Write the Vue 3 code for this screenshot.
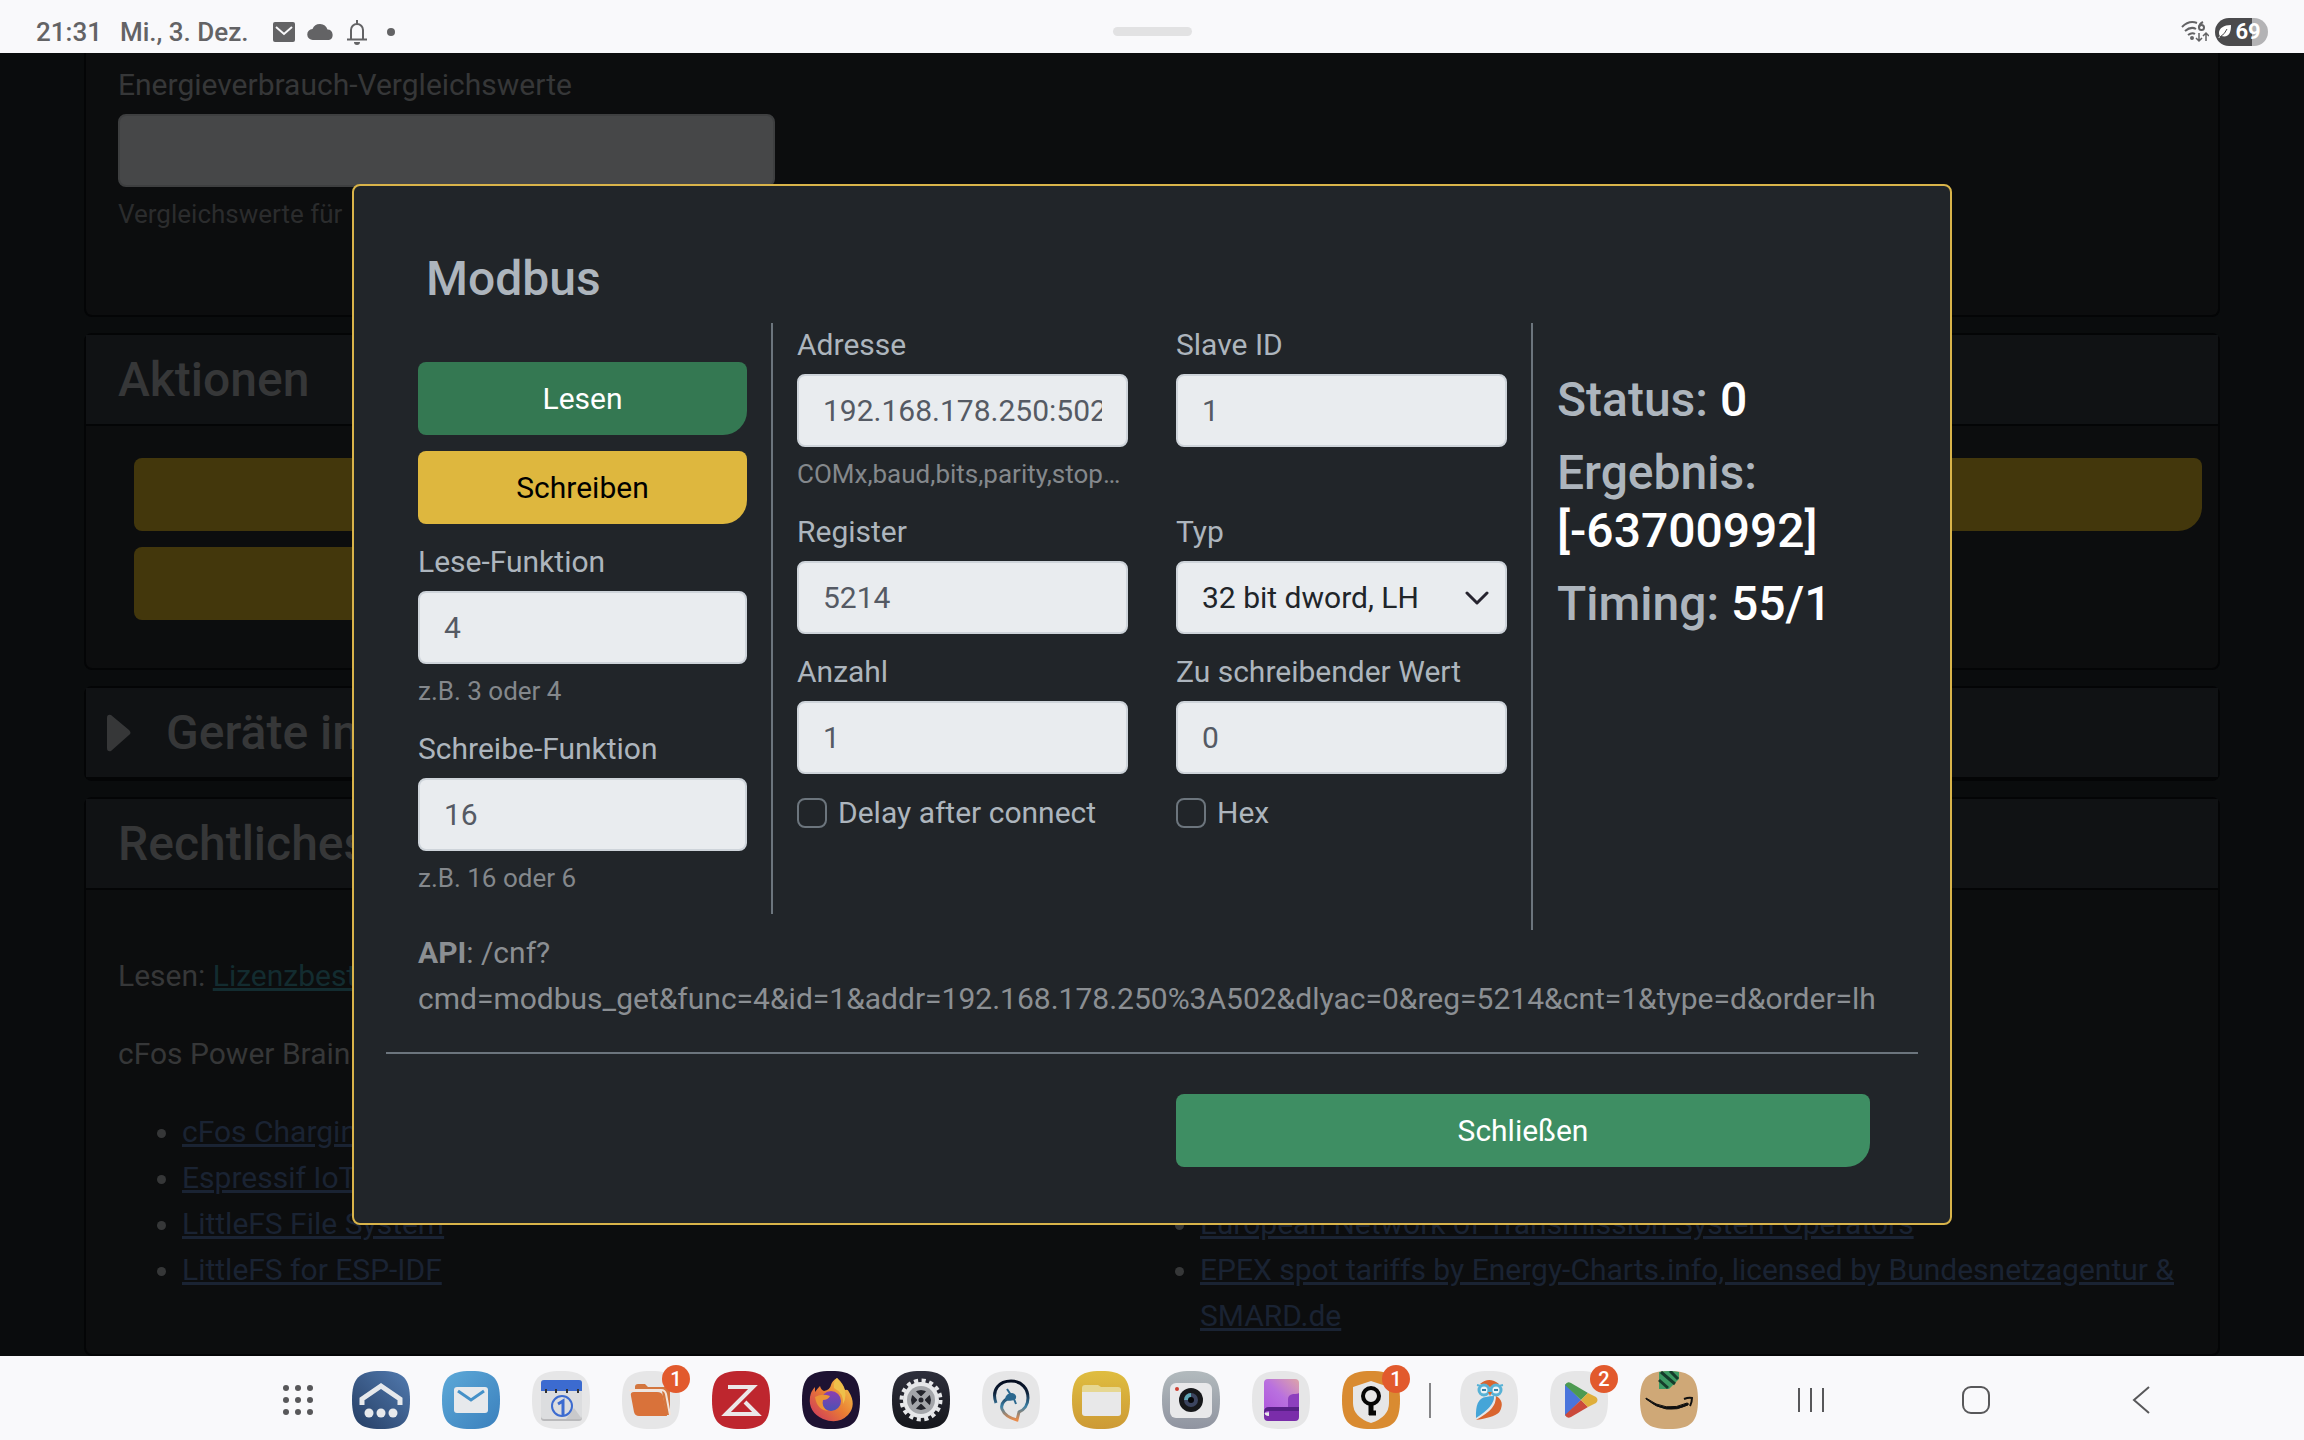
<script setup>
import { ref } from 'vue'

const address = ref('192.168.178.250:502')
const slaveId = ref('1')
const register = ref('5214')
const type = ref('dlh')
const count = ref('1')
const value = ref('0')
const readFn = ref('4')
const writeFn = ref('16')
const delay = ref(false)
const hex = ref(false)
const comparison = ref('')
</script>

<template>
  <div class="shell">
    <header class="status">
      <div class="status-left">
        <span>21:31</span>
        <span class="date">Mi., 3. Dez.</span>
        <svg width="22" height="20" viewBox="0 0 22 20"><rect width="22" height="20" rx="2" fill="#636365" /><path d="M3 5l8 7 8-7" fill="none" stroke="#f9f9fb" stroke-width="2" /></svg>
        <svg class="cloud" width="28" height="18" viewBox="0 0 28 18"><path d="M6 17a5.500 5.500 0 0 1-.5-11A8 8 0 0 1 20.500 6.500 5.400 5.400 0 0 1 22 17z" fill="#636365" /></svg>
        <svg class="bell" width="20" height="26" viewBox="0 0 20 26"><path d="M4 20v-9a6 6 0 0 1 12 0v9M0 20.500h20M10 1v4" fill="none" stroke="#636365" stroke-width="2" /><path d="M7 23h6a3 3 0 0 1-6 0z" fill="#636365" /></svg>
        <i class="dot"></i>
      </div>
      <i class="handle"></i>
      <div class="status-right">
        <svg width="28" height="24" viewBox="0 0 28 24" fill="none" stroke="#636365" stroke-width="2">
          <path d="M1 7Q8 0 16 3M4 11q6-5 11-2M7 15q4-3 7-1" />
          <circle cx="11" cy="18" r="1" />
          <path d="M22 2q-4 2-4 6" /><circle cx="20.500" cy="7.500" r="2.500" />
          <path d="M18 13v8M15 18l3 3 3-3M25 21v-8M22 16l3-3 3 3" stroke-width="1.500" />
        </svg>
        <div class="battery">
          <svg width="14" height="14" viewBox="0 0 14 14"><path d="M13 0C6 0 1 3 1 8q0 2 1 3L0 13q2 0 3-2c8 2 10-3 10-11z" fill="#fff" /><path d="M2 12Q7 9 9 4" stroke="#4b4b4d" stroke-width="1" fill="none" /></svg>
          <span>69</span>
        </div>
      </div>
    </header>

    <main class="main">
      <div class="page">
        <section class="card card-first">
          <label class="label" for="cmp">Energieverbrauch-Vergleichswerte</label>
          <input id="cmp" v-model="comparison" class="input input-dim" type="text" />
          <p class="hint">Vergleichswerte für</p>
        </section>
        <section class="card">
          <h2 class="card-head">Aktionen</h2>
          <div class="actions">
            <button class="btn btn-dim" aria-label="Aktion 1"></button>
            <button class="btn btn-dim btn-half" aria-label="Aktion 2"></button>
          </div>
        </section>
        <section class="card">
          <h2 class="card-head card-fold">
            <svg width="24" height="38" viewBox="0 0 24 38"><path d="M0 4Q0 0 4 1L22 16q3 3 0 5L4 37Q0 38 0 34z" fill="#363738" /></svg>
            Geräte im
          </h2>
        </section>
        <section class="card card-last">
          <h2 class="card-head">Rechtliches</h2>
          <div class="legal">
            <p>Lesen: <a class="license" href="#">Lizenzbestimmungen</a></p>
            <p>cFos Power Brain</p>
            <div class="lists">
              <ul>
                <li><a href="#">cFos Charging</a></li>
                <li><a href="#">Espressif IoT</a></li>
                <li><a href="#">LittleFS File System</a></li>
                <li><a href="#">LittleFS for ESP-IDF</a></li>
              </ul>
              <ul class="list-right">
                <li><a href="#">European Network of Transmission System Operators</a></li>
                <li><a href="#">EPEX spot tariffs by Energy-Charts.info, licensed by Bundesnetzagentur &amp; SMARD.de</a></li>
              </ul>
            </div>
          </div>
        </section>
      </div>

      <div class="overlay">
        <div class="modal" role="dialog" aria-labelledby="title">
          <h1 id="title" class="title">Modbus</h1>
          <div class="cols">
            <div class="col col-left">
              <button class="btn btn-read">Lesen</button>
              <button class="btn btn-write">Schreiben</button>
              <div class="group">
                <label class="label" for="readfn">Lese-Funktion</label>
                <input id="readfn" v-model="readFn" class="input" type="text" />
                <p class="hint">z.B. 3 oder 4</p>
              </div>
              <div class="group">
                <label class="label" for="writefn">Schreibe-Funktion</label>
                <input id="writefn" v-model="writeFn" class="input" type="text" />
                <p class="hint">z.B. 16 oder 6</p>
              </div>
            </div>
            <div class="col col-mid">
              <div class="group">
                <label class="label" for="addr">Adresse</label>
                <input id="addr" v-model="address" class="input" type="text" />
                <p class="hint">COMx,baud,bits,parity,stop…</p>
              </div>
              <div class="group">
                <label class="label" for="slave">Slave ID</label>
                <input id="slave" v-model="slaveId" class="input" type="text" />
              </div>
              <div class="group">
                <label class="label" for="reg">Register</label>
                <input id="reg" v-model="register" class="input" type="text" />
              </div>
              <div class="group">
                <label class="label" for="type">Typ</label>
                <div class="select-wrap">
                  <select id="type" v-model="type" class="input select">
                    <option value="dlh">32 bit dword, LH</option>
                  </select>
                  <svg class="chevron" width="24" height="16" viewBox="0 0 24 16"><path d="M2 3l10 10L22 3" fill="none" stroke="#26242f" stroke-width="3" stroke-linecap="round" stroke-linejoin="round" /></svg>
                </div>
              </div>
              <div class="group">
                <label class="label" for="cnt">Anzahl</label>
                <input id="cnt" v-model="count" class="input" type="text" />
              </div>
              <div class="group">
                <label class="label" for="val">Zu schreibender Wert</label>
                <input id="val" v-model="value" class="input" type="text" />
              </div>
              <label class="check"><input v-model="delay" type="checkbox" />Delay after connect</label>
              <label class="check"><input v-model="hex" type="checkbox" />Hex</label>
            </div>
            <div class="col col-right">
              <p>Status: <b>0</b></p>
              <p>Ergebnis: <b>[-63700992]</b></p>
              <p>Timing: <b>55/1</b></p>
            </div>
          </div>
          <p class="api"><b>API</b>: /cnf?<br />cmd=modbus_get&amp;func=4&amp;id=1&amp;addr=192.168.178.250%3A502&amp;dlyac=0&amp;reg=5214&amp;cnt=1&amp;type=d&amp;order=lh</p>
          <hr class="rule" />
          <div class="footer">
            <button class="btn btn-close">Schließen</button>
          </div>
        </div>
      </div>
    </main>

    <footer class="dock">
      <button class="launcher" aria-label="Apps">
        <svg width="30" height="30" viewBox="0 0 30 30" fill="#58585a">
          <circle v-for="n in 9" :key="n" :cx="3 + ((n - 1) % 3) * 12" :cy="3 + Math.floor((n - 1) / 3) * 12" r="3" />
        </svg>
      </button>
      <div class="apps">
        <button class="app" aria-label="Home">
          <svg viewBox="0 0 58 58"><defs><linearGradient id="gh" x1="1" y1="0" x2="0" y2="1"><stop stop-color="#527bb0" /><stop offset="1" stop-color="#253d63" /></linearGradient></defs><path d="M0 29C0 7 7 0 29 0s29 7 29 29-7 29-29 29S0 51 0 29z" fill="url(#gh)" /><path d="M10 34v-6l19-13 19 13v6" fill="none" stroke="#e7e9ec" stroke-width="5" /><g fill="#e7e9ec"><circle cx="17" cy="42" r="4.500" /><circle cx="29" cy="42" r="4.500" /><circle cx="41" cy="42" r="4.500" /></g></svg>
        </button>
        <button class="app" aria-label="Mail">
          <svg viewBox="0 0 58 58"><defs><linearGradient id="gm" x1="0" y1="0" x2="1" y2="1"><stop stop-color="#5da9d8" /><stop offset="1" stop-color="#3b80bd" /></linearGradient></defs><path d="M0 29C0 7 7 0 29 0s29 7 29 29-7 29-29 29S0 51 0 29z" fill="url(#gm)" /><rect x="12" y="16" width="34" height="26" rx="3" fill="#e7e9ec" /><path d="M16 20l13 9 13-9" fill="none" stroke="#4691c8" stroke-width="3" /></svg>
        </button>
        <button class="app" aria-label="Kalender">
          <svg viewBox="0 0 58 58"><path d="M0 29C0 7 7 0 29 0s29 7 29 29-7 29-29 29S0 51 0 29z" fill="#e6e6e7" /><rect x="9" y="9" width="41" height="41" rx="3" fill="#b9b9bb" /><rect x="9" y="9" width="41" height="39" rx="3" fill="#dcdddf" /><path d="M9 12q0-3 3-3h35q3 0 3 3v8H9z" fill="#3c6bd0" /><path d="M14 18v4M24 18v4M35 18v4M46 18v4" stroke="#333" stroke-width="2" /><path d="M34 48l8-11 8 11z" fill="#c9c9cb" /><circle cx="30" cy="35" r="10" fill="none" stroke="#3c6bd0" stroke-width="2" /><path d="M26 33l5-3v14" fill="none" stroke="#3c6bd0" stroke-width="3" /></svg>
        </button>
        <button class="app" aria-label="Dateien">
          <svg viewBox="0 0 58 58"><path d="M0 29C0 7 7 0 29 0s29 7 29 29-7 29-29 29S0 51 0 29z" fill="#e6e6e7" /><path d="M13 18v-2q0-3 3-3h7l3 3h22v28h-4L40 20z" fill="#d3763f" /><path d="M8 20q0-1 2-1h29q4 0 5 4l4 21" fill="none" stroke="#f4e4da" stroke-width="2" /><path d="M9 25q-1-4 3-4h23q5 0 6 4l4 20H17q-4 0-5-4z" fill="#d9723a" /></svg>
          <span class="badge">1</span>
        </button>
        <button class="app" aria-label="Zotero">
          <svg viewBox="0 0 58 58"><path d="M0 29C0 7 7 0 29 0s29 7 29 29-7 29-29 29S0 51 0 29z" fill="#be262e" /><path d="M16 16h25L14 43h31L33 31" fill="none" stroke="#ece7e8" stroke-width="4" /></svg>
        </button>
        <button class="app" aria-label="Firefox">
          <svg viewBox="0 0 58 58"><defs><linearGradient id="gf" x1="1" y1="0" x2="0" y2="1"><stop stop-color="#f3d34f" /><stop offset=".5" stop-color="#ea7d33" /><stop offset="1" stop-color="#c92f63" /></linearGradient><linearGradient id="gg" x1="0" y1="0" x2="0" y2="1"><stop stop-color="#8d3fb0" /><stop offset="1" stop-color="#4b51b5" /></linearGradient></defs><path d="M0 29C0 7 7 0 29 0s29 7 29 29-7 29-29 29S0 51 0 29z" fill="#1e1232" /><path d="M35 7q6 5 8 12 3-1 4 2 8 13-1 23Q36 54 21 48 6 41 8 26q1-6 5-10v5q3-4 5-6 1 4 4 5 6-1 7-6 1-4 6-7z" fill="url(#gf)" /><circle cx="29" cy="30" r="10" fill="url(#gg)" /><path d="M13 26q7-4 15-1-2 4-7 4-2 7 5 11-11-1-13-14z" fill="#eb9437" /><path d="M32 17q10 5 9 16 5-9 0-18l-6-8q-4 4-3 10z" fill="#eec04a" /></svg>
        </button>
        <button class="app" aria-label="Einstellungen">
          <svg viewBox="0 0 58 58"><defs><linearGradient id="gs" x1="0" y1="0" x2="0" y2="1"><stop stop-color="#2e2f3b" /><stop offset="1" stop-color="#15161b" /></linearGradient></defs><path d="M0 29C0 7 7 0 29 0s29 7 29 29-7 29-29 29S0 51 0 29z" fill="url(#gs)" /><circle cx="29" cy="29" r="19.500" fill="none" stroke="#e6e7e9" stroke-width="4" stroke-dasharray="4.100 3.560" /><circle cx="29" cy="29" r="18" fill="#e6e7e9" /><circle cx="29" cy="29" r="14" fill="#a3a5a9" /><circle cx="29" cy="29" r="10" fill="#23242b" /><path d="M20 20l18 18M38 20L20 38" stroke="#a3a5a9" stroke-width="5" /><circle cx="29" cy="29" r="4" fill="#a3a5a9" /><circle cx="29" cy="29" r="2.500" fill="#23242b" /></svg>
        </button>
        <button class="app" aria-label="Assistent">
          <svg viewBox="0 0 58 58"><defs><linearGradient id="ga" x1="0" y1="0" x2="0" y2="1"><stop stop-color="#050d20" /><stop offset=".3" stop-color="#0e2038" /><stop offset=".65" stop-color="#3b80a6" /><stop offset="1" stop-color="#ea8b4a" /></linearGradient></defs><path d="M0 29C0 7 7 0 29 0s29 7 29 29-7 29-29 29S0 51 0 29z" fill="#e6e6e7" /><path d="M14 32C9 18 18 10 29 10c11 0 17 8 17 17 0 7-4 12-9 14l-2 8q-12-3-15-11c-2-7 4-10 9-12" fill="none" stroke="url(#ga)" stroke-width="3" /><path d="M24 28q1-5 6-5 4 1 3 4-3 3-9 1zM25 18l4 6M32 28l2 5" fill="#2b688f" stroke="#2b688f" stroke-width="2" /></svg>
        </button>
        <button class="app" aria-label="Ordner">
          <svg viewBox="0 0 58 58"><defs><linearGradient id="go" x1="0" y1="0" x2="0" y2="1"><stop stop-color="#dfbd40" /><stop offset="1" stop-color="#cd9a35" /></linearGradient></defs><path d="M0 29C0 7 7 0 29 0s29 7 29 29-7 29-29 29S0 51 0 29z" fill="url(#go)" /><path d="M10 24v-7q0-3 3-3h13l3 2h17q3 0 3 3v5z" fill="#e6d792" /><path d="M10 21h39v21q0 3-3 3H13q-3 0-3-3z" fill="#e8e8e9" /></svg>
        </button>
        <button class="app" aria-label="Kamera">
          <svg viewBox="0 0 58 58"><defs><linearGradient id="gk" x1="0" y1="0" x2="0" y2="1"><stop stop-color="#b2babd" /><stop offset="1" stop-color="#9094a0" /></linearGradient></defs><path d="M0 29C0 7 7 0 29 0s29 7 29 29-7 29-29 29S0 51 0 29z" fill="url(#gk)" /><rect x="8" y="12" width="42" height="35" rx="6" fill="#e8e8ea" /><circle cx="29" cy="29" r="12" fill="#17181b" /><circle cx="29" cy="29" r="7" fill="#3c4560" /><path d="M29 22a7 7 0 0 0-7 7h4l3-3z" fill="#5fa6b4" /><circle cx="29" cy="29" r="3" fill="#060608" /><circle cx="15" cy="18" r="2" fill="#ce3f32" /></svg>
        </button>
        <button class="app" aria-label="Notizen">
          <svg viewBox="0 0 58 58"><defs><linearGradient id="gn" x1="0" y1="1" x2="1" y2="0"><stop stop-color="#ae55dc" /><stop offset=".5" stop-color="#b970df" /><stop offset="1" stop-color="#dda4a8" /></linearGradient></defs><path d="M0 29C0 7 7 0 29 0s29 7 29 29-7 29-29 29S0 51 0 29z" fill="#e6e6e7" /><path d="M12 42V12q0-4 4-4h27q4 0 4 4v25z" fill="url(#gn)" /><path d="M47 22v20H36V28q0-4 5-5 5 0 6-1z" fill="#8d3fbe" /><path d="M12 40q0 5 5 5V36h30v10q0 4-4 4H16q-4 0-4-4z" fill="#7a2daa" /><path d="M12 41q0-5 5-5h30v4H17q-5 0-5 4z" fill="#571f86" /></svg>
        </button>
        <button class="app" aria-label="Passwörter">
          <svg viewBox="0 0 58 58"><path d="M0 29C0 7 7 0 29 0s29 7 29 29-7 29-29 29S0 51 0 29z" fill="#d98b31" /><path d="M29 10l18 6v16q0 14-18 20-18-6-18-20V16z" fill="#e6e6e7" /><circle cx="29" cy="25" r="8" fill="none" stroke="#060606" stroke-width="4" /><path d="M29 33v11M27 42h7" stroke="#060606" stroke-width="5" /></svg>
          <span class="badge">1</span>
        </button>
        <i class="divider"></i>
        <button class="app" aria-label="Eule">
          <svg viewBox="0 0 58 58"><path d="M0 29C0 7 7 0 29 0s29 7 29 29-7 29-29 29S0 51 0 29z" fill="#e6e6e7" /><path d="M20 13q9-8 19 0l-9 3zM36 25q9 5 4 15-3 6-24 9 12-7 16-12 4-5 4-12z" fill="#d9652f" /><path d="M16 47q-1-20 10-21 4-1 8-1 1 10-18 22z" fill="#45a5d8" /><g fill="#eaf2f5" stroke="#58b2d6" stroke-width="3"><circle cx="24" cy="19" r="5" /><circle cx="36" cy="19" r="5" /></g><path d="M17 14l4 1M43 14l-4 1" stroke="#58b2d6" stroke-width="2" /><path d="M22 19h4M34 19h4" stroke="#317fa5" stroke-width="2" /><path d="M28 21h4l-2 4z" fill="#d9652f" /></svg>
        </button>
        <button class="app" aria-label="Play Store">
          <svg viewBox="0 0 58 58"><path d="M0 29C0 7 7 0 29 0s29 7 29 29-7 29-29 29S0 51 0 29z" fill="#e6e6e7" /><path d="M15 13v32l16-16z" fill="#4a75dc" /><path d="M15 14q2-4 6-2l17 10-7 7z" fill="#4d9a51" /><path d="M15 44q2 4 6 2l17-10-7-7z" fill="#cb4a3b" /><path d="M38 22l8 4q3 3 0 6l-8 4-7-7z" fill="#dfae3b" /></svg>
          <span class="badge">2</span>
        </button>
        <button class="app" aria-label="Amazon">
          <svg viewBox="0 0 58 58"><path d="M0 29C0 7 7 0 29 0s29 7 29 29-7 29-29 29S0 51 0 29z" fill="#cfa877" /><path d="M19 1q10-2 20 0v7L29 18H19z" fill="#3d9a63" /><path d="M19 9l9 8M21 1l14 12M30 0l8 8" stroke="#153c2b" stroke-width="3" /><path d="M6 27q20 15 41 5 2 0 1 2-22 11-42-6z" fill="#101010" stroke="#101010" stroke-linejoin="round" /><path d="M44 28q5-2 8-1 0 4-2 8" fill="none" stroke="#101010" stroke-width="2" /></svg>
        </button>
      </div>
      <nav class="nav">
        <button aria-label="Letzte Apps"><svg width="30" height="30" viewBox="0 0 30 30"><path d="M3 3v24M15 3v24M27 3v24" stroke="#58585a" stroke-width="2" /></svg></button>
        <button aria-label="Startbildschirm"><svg width="30" height="30" viewBox="0 0 30 30"><rect x="2" y="2" width="26" height="26" rx="8" fill="none" stroke="#58585a" stroke-width="2" /></svg></button>
        <button aria-label="Zurück"><svg width="30" height="30" viewBox="0 0 30 30"><path d="M23 2L8 15l15 13" fill="none" stroke="#58585a" stroke-width="2" /></svg></button>
      </nav>
    </footer>
  </div>
</template>

<style>
body {
  background: #0a0c0d;
}
</style>

<style scoped>
.shell,
.shell * {
  box-sizing: border-box;
}
.shell {
  display: flex;
  flex-direction: column;
  height: 100vh;
  font: 400 30px/46px Roboto, "Noto Sans", sans-serif;
  color: #adb5bd;
}
p,
h1,
h2,
ul {
  margin: 0;
}
button,
input,
select {
  font: inherit;
}
button {
  border: 0;
  padding: 0;
  background: none;
}
svg {
  display: block;
  flex: none;
}

/* status bar */
.status {
  flex: none;
  display: grid;
  grid-template-columns: 1fr auto 1fr;
  align-items: center;
  height: 53px;
  padding: 10px 36px 0;
  background: #f9f9fb;
  color: #636365;
  font-size: 26px;
  line-height: 32px;
  font-weight: 500;
}
.status-left,
.status-right {
  display: flex;
  align-items: center;
}
.date {
  margin: 0 24px 0 18px;
}
.cloud {
  margin: 0 12px;
}
.dot {
  width: 8px;
  height: 8px;
  margin-left: 20px;
  border-radius: 50%;
  background: #636365;
}
.handle {
  width: 79px;
  height: 9px;
  border-radius: 5px;
  background: #e2e2e3;
}
.status-right {
  justify-content: flex-end;
  gap: 6px;
}
.battery {
  display: flex;
  align-items: center;
  justify-content: center;
  gap: 3px;
  width: 53px;
  height: 28px;
  padding-right: 4px;
  border-radius: 14px;
  background: linear-gradient(90deg, #4b4b4d 69%, #b3b3b5 69%);
  color: #fff;
  font-size: 22px;
  line-height: 28px;
  font-weight: 700;
}

/* dimmed page */
.main {
  position: relative;
  flex: 1;
  min-height: 0;
  overflow: hidden;
}
.page {
  display: flex;
  flex-direction: column;
  gap: 16px;
  height: 100%;
  padding: 0 84px;
  background: #0a0c0d;
  color: #363738;
}
.card {
  flex: none;
  border: 2px solid #040506;
  border-radius: 8px;
  background: #0c0d0e;
}
.card-first {
  height: 264px;
  padding: 10px 32px 0;
  border-top: 0;
  border-radius: 0 0 8px 8px;
}
.card-first .hint {
  color: #2b2c2d;
}
.card-last {
  flex: 1 0 auto;
}
.card-head {
  padding: 16px 32px 15px;
  border-bottom: 2px solid #040506;
  background: #101214;
  font-size: 48px;
  line-height: 58px;
  font-weight: 500;
}
.card-fold {
  display: flex;
  align-items: center;
  gap: 35px;
  padding-left: 21px;
}
.actions {
  display: flex;
  flex-direction: column;
  padding: 32px 16px 32px 48px;
}
.legal {
  padding: 63px 32px 0;
}
.legal p {
  margin-bottom: 32px;
}
.lists {
  display: grid;
  grid-template-columns: 1fr 1fr;
}
.lists ul {
  padding-left: 64px;
}
.lists .list-right {
  padding-top: 92px;
  padding-left: 48px;
}
.lists a {
  color: #1a2333;
}
.license {
  color: #132c30;
}

/* form parts */
.label {
  display: block;
  margin-bottom: 7px;
  line-height: 44px;
}
.input {
  display: block;
  width: 100%;
  height: 73px;
  padding: 0 24px;
  border: 2px solid #ced4da;
  border-radius: 8px;
  background: #e9ecef;
  color: #555a64;
}
.input-dim {
  width: 657px;
  border-color: #3e3f40;
  background: #464748;
}
.hint {
  margin-top: 7px;
  font-size: 26px;
  line-height: 40px;
  color: #84888c;
  white-space: nowrap;
}
.group {
  margin-bottom: 16px;
}
.btn {
  display: block;
  width: 100%;
  height: 73px;
  margin-bottom: 16px;
  border-radius: 8px 8px 24px 8px;
}
.btn-dim {
  background: #43370c;
}
.btn-half {
  width: 50%;
}
.btn-read {
  background: #347852;
  color: #fff;
}
.btn-write {
  background: #deb73e;
  color: #000;
}
.select-wrap {
  position: relative;
}
.select {
  appearance: none;
  color: #212529;
}
.chevron {
  position: absolute;
  top: 29px;
  right: 18px;
}
.check {
  display: flex;
  align-items: center;
  gap: 11px;
}
.check input {
  appearance: none;
  width: 30px;
  height: 30px;
  margin: 0;
  border: 2px solid #6c757d;
  border-radius: 8px;
}

/* modal */
.overlay {
  position: absolute;
  inset: 0;
  display: flex;
  justify-content: center;
  align-items: flex-start;
  padding-top: 131px;
}
.modal {
  width: 100%;
  max-width: 1600px;
  padding: 64px 40px 56px;
  border: 2px solid #d9b44a;
  border-radius: 8px;
  background: #212529;
}
.title {
  padding: 0 32px 15px;
  font-size: 48px;
  line-height: 58px;
  font-weight: 500;
}
.cols {
  display: grid;
  grid-template-columns: minmax(0, 1fr) minmax(0, 2fr) minmax(0, 1fr);
}
.col {
  padding: 0 24px;
}
.col-left {
  margin-bottom: 16px;
  padding-top: 39px;
  border-right: 2px solid #6c757d;
}
.col-mid {
  display: grid;
  grid-template-columns: minmax(0, 1fr) minmax(0, 1fr);
  column-gap: 48px;
  align-content: start;
}
.col-right {
  padding-top: 48px;
  border-left: 2px solid #6c757d;
  font-size: 48px;
  line-height: 58px;
  font-weight: 500;
}
.col-right p {
  margin-bottom: 15px;
}
.col-right b {
  color: #fff;
  font-weight: 500;
}
.api {
  padding: 0 24px;
  color: #8b8f93;
}
.rule {
  margin: 30px -8px 40px;
  border: 0;
  border-top: 2px solid #6c757d;
}
.footer {
  width: 50%;
  margin-left: auto;
  padding: 0 40px 0 24px;
}
.btn-close {
  margin: 0;
  background: #3e8e63;
  color: #fff;
}

/* dock */
.dock {
  flex: none;
  display: flex;
  align-items: center;
  height: 84px;
  padding: 4px 148px 0 283px;
  background: #f9f9fb;
}
.launcher {
  margin-right: 39px;
}
.apps {
  display: flex;
  align-items: center;
  gap: 32px;
}
.app {
  position: relative;
  width: 58px;
  height: 58px;
}
.badge {
  position: absolute;
  top: -6px;
  right: -10px;
  width: 28px;
  height: 28px;
  border-radius: 50%;
  background: #e25a2d;
  color: #fff;
  font-size: 20px;
  line-height: 28px;
  font-weight: 500;
  text-align: center;
}
.divider {
  width: 2px;
  height: 35px;
  margin: 0 -3px;
  background: #858587;
}
.nav {
  display: flex;
  gap: 135px;
  margin-left: auto;
}
</style>
